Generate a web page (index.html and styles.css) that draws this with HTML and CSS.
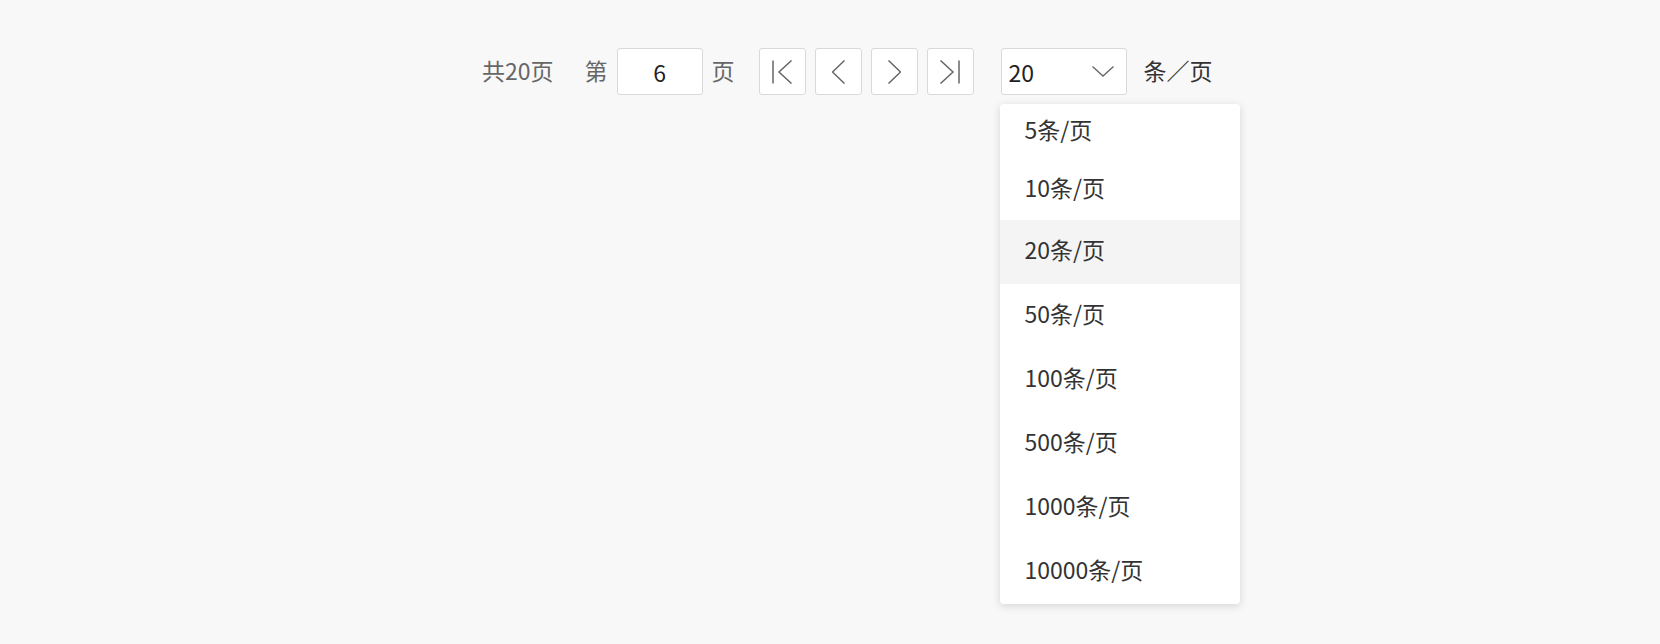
FILE: index.html
```html
<!DOCTYPE html>
<html lang="zh-CN">
<head>
<meta charset="utf-8">
<title>分页</title>
<link rel="stylesheet" href="styles.css">
</head>
<body>
<div class="pager">
  <span class="label total">共20页</span>
  <span class="label">第</span>
  <input class="page-input" type="text" value="6">
  <span class="label after">页</span>
  <div class="nav">
    <button class="nav-btn" type="button" aria-label="首页">
      <svg width="20" height="24" viewBox="0 0 20 24"><line x1="1" y1="0.5" x2="1" y2="23.5"/><polyline points="19.5,0.5 7,12 19.5,23.5"/></svg>
    </button>
    <button class="nav-btn" type="button" aria-label="上一页">
      <svg width="13" height="24" viewBox="0 0 13 24"><polyline points="12.5,0.5 0.5,12 12.5,23.5"/></svg>
    </button>
    <button class="nav-btn" type="button" aria-label="下一页">
      <svg width="13" height="24" viewBox="0 0 13 24"><polyline points="0.5,0.5 12.5,12 0.5,23.5"/></svg>
    </button>
    <button class="nav-btn" type="button" aria-label="末页">
      <svg width="20" height="24" viewBox="0 0 20 24"><polyline points="0.5,0.5 13,12 0.5,23.5"/><line x1="19" y1="0.5" x2="19" y2="23.5"/></svg>
    </button>
  </div>
  <div class="select-wrap">
    <div class="select">
      <span class="select-value">20</span>
      <svg class="caret" width="22" height="11" viewBox="0 0 22 11"><polyline points="0.5,0.5 11,10 21.5,0.5"/></svg>
    </div>
    <ul class="dropdown">
      <li class="opt first">5条/页</li>
      <li class="opt second">10条/页</li>
      <li class="opt active">20条/页</li>
      <li class="opt">50条/页</li>
      <li class="opt">100条/页</li>
      <li class="opt">500条/页</li>
      <li class="opt">1000条/页</li>
      <li class="opt">10000条/页</li>
    </ul>
  </div>
  <span class="unit">条／页</span>
</div>
</body>
</html>
```

FILE: styles.css
```css
html, body {
  margin: 0;
  padding: 0;
  background: #f8f8f8;
}
body {
  font-family: "Noto Sans CJK SC", "Noto Sans", sans-serif;
  font-size: 23px;
  color: #333;
  min-height: 644px;
}
.pager {
  display: flex;
  align-items: center;
  padding: 48px 0 0 482px;
}
.label {
  color: #666;
  line-height: 45px;
  padding-bottom: 2px;
  margin-right: 9px;
}
.label.total {
  margin-right: 31px;
}
.label.after {
  margin-right: 24px;
}
.page-input {
  box-sizing: border-box;
  width: 86px;
  height: 47px;
  margin: 0 9px 0 0;
  border: 1px solid #d9d9d9;
  border-radius: 3px;
  background: #fff;
  font-family: inherit;
  font-size: 23px;
  color: #222;
  text-align: center;
  padding: 0;
  outline: none;
}
.nav {
  display: flex;
  gap: 9px;
}
.nav-btn {
  box-sizing: border-box;
  width: 47px;
  height: 47px;
  border: 1px solid #d9d9d9;
  border-radius: 3px;
  background: #fff;
  padding: 0;
  display: flex;
  align-items: center;
  justify-content: center;
}
.nav-btn svg,
.caret {
  fill: none;
  stroke: #666;
  stroke-width: 1.5;
  display: block;
}
.select-wrap {
  position: relative;
  margin-left: 27px;
}
.select {
  box-sizing: border-box;
  width: 126px;
  height: 47px;
  border: 1px solid #d9d9d9;
  border-radius: 3px;
  background: #fff;
  display: flex;
  align-items: center;
  justify-content: space-between;
  padding: 0 12px 0 7px;
  color: #222;
}
.caret {
  stroke-width: 1.3;
}
.unit {
  margin-left: 17px;
  color: #333;
  line-height: 45px;
  padding-bottom: 2px;
}
.dropdown {
  position: absolute;
  top: 56px;
  left: -1px;
  width: 240px;
  margin: 0;
  padding: 0;
  list-style: none;
  background: #fff;
  border-radius: 4px;
  box-shadow: 0 2px 8px rgba(0, 0, 0, 0.15);
  overflow: hidden;
}
.opt {
  height: 58px;
  line-height: 58px;
  padding: 0 0 6px 25px;
  color: #333;
  white-space: nowrap;
}
.opt.first {
  height: 50px;
  line-height: 50px;
  padding-bottom: 2px;
}
.opt.second {
  height: 62px;
  line-height: 62px;
  padding-bottom: 2px;
}
.opt.active {
  background: #f4f4f4;
}
```
